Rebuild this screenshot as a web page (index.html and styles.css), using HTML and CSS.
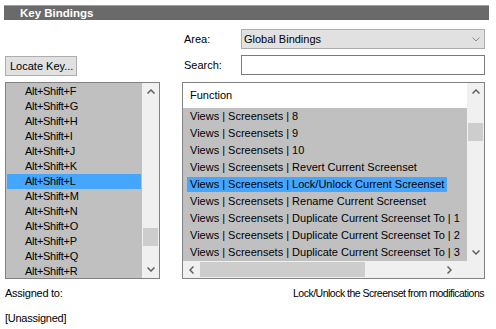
FILE: index.html
```html
<!DOCTYPE html>
<html lang="en">
<head>
  <meta charset="UTF-8" />
  <meta name="viewport" content="width=device-width, initial-scale=1.0"/>
  <title>Key Bindings</title>
  <link rel="stylesheet" href="styles.css">
</head>
<body>

  <div class="titlebar">Key Bindings</div>

  <div class="main">

    <!-- Locate button -->
    <div class="locate">
      <button class="btn">Locate Key...</button>
    </div>

    <!-- Area / Search -->
    <div class="form">
      <div class="form-row">
        <label>Area:</label>
        <div class="combo">
          <span>Global Bindings</span>
          <svg width="8" height="5" viewBox="0 0 8 5"><polyline points="0.5,0.5 4,4 7.5,0.5" fill="none" stroke="#8c8c8c" stroke-width="1"/></svg>
        </div>
      </div>
      <div class="form-row">
        <label>Search:</label>
        <input type="text" class="search">
      </div>
    </div>

    <!-- Key list -->
    <div class="keys">
      <ul class="key-list">
        <li>Alt+Shift+F</li>
        <li>Alt+Shift+G</li>
        <li>Alt+Shift+H</li>
        <li>Alt+Shift+I</li>
        <li>Alt+Shift+J</li>
        <li>Alt+Shift+K</li>
        <li class="selected">Alt+Shift+L</li>
        <li>Alt+Shift+M</li>
        <li>Alt+Shift+N</li>
        <li>Alt+Shift+O</li>
        <li>Alt+Shift+P</li>
        <li>Alt+Shift+Q</li>
        <li>Alt+Shift+R</li>
      </ul>
      <div class="vscroll">
        <div class="arrow"><svg width="8" height="5" viewBox="0 0 8 5"><polyline points="0.5,4.5 4,1 7.5,4.5" fill="none" stroke="#606060" stroke-width="1.5"/></svg></div>
        <div class="track"><div class="thumb keys-thumb"></div></div>
        <div class="arrow"><svg width="8" height="5" viewBox="0 0 8 5"><polyline points="0.5,0.5 4,4 7.5,0.5" fill="none" stroke="#606060" stroke-width="1.5"/></svg></div>
      </div>
    </div>

    <!-- Function list -->
    <div class="funcs">
      <div class="funcs-body">
        <div class="funcs-head">Function</div>
        <ul class="func-list">
          <li><span>Views | Screensets | 8</span></li>
          <li><span>Views | Screensets | 9</span></li>
          <li><span>Views | Screensets | 10</span></li>
          <li><span>Views | Screensets | Revert Current Screenset</span></li>
          <li class="selected"><span>Views | Screensets | Lock/Unlock Current Screenset</span></li>
          <li><span>Views | Screensets | Rename Current Screenset</span></li>
          <li><span>Views | Screensets | Duplicate Current Screenset To | 1</span></li>
          <li><span>Views | Screensets | Duplicate Current Screenset To | 2</span></li>
          <li><span>Views | Screensets | Duplicate Current Screenset To | 3</span></li>
        </ul>
        <div class="hscroll">
          <div class="arrow"><svg width="5" height="8" viewBox="0 0 5 8"><polyline points="4.5,0.5 1,4 4.5,7.5" fill="none" stroke="#606060" stroke-width="1.5"/></svg></div>
          <div class="track"><div class="thumb funcs-hthumb"></div></div>
          <div class="arrow arrow-end"><svg width="5" height="8" viewBox="0 0 5 8"><polyline points="0.5,0.5 4,4 0.5,7.5" fill="none" stroke="#606060" stroke-width="1.5"/></svg></div>
        </div>
      </div>
      <div class="vscroll-col">
        <div class="vscroll">
          <div class="arrow"><svg width="8" height="5" viewBox="0 0 8 5"><polyline points="0.5,4.5 4,1 7.5,4.5" fill="none" stroke="#606060" stroke-width="1.5"/></svg></div>
          <div class="track"><div class="thumb funcs-thumb"></div></div>
          <div class="arrow"><svg width="8" height="5" viewBox="0 0 8 5"><polyline points="0.5,0.5 4,4 7.5,0.5" fill="none" stroke="#606060" stroke-width="1.5"/></svg></div>
        </div>
        <div class="corner"></div>
      </div>
    </div>

    <!-- Footer -->
    <div class="assigned">
      <div>Assigned to:</div>
      <div class="unassigned">[Unassigned]</div>
    </div>
    <div class="desc">Lock/Unlock the Screenset from modifications</div>

  </div>

</body>
</html>
```

FILE: styles.css
```css
* {
  box-sizing: border-box;
}
body {
  margin: 0;
  background: #fff;
  font-family: "Liberation Sans", Arial, sans-serif;
  font-size: 11px;
  color: #000;
}
ul {
  list-style: none;
  margin: 0;
  padding: 0;
}

.titlebar {
  margin: 5px 7px 0 4px;
  height: 15px;
  background: #6a6a6a;
  border-top: 1px solid #a0a0a0;
  color: #fff;
  font-weight: bold;
  font-size: 11.5px;
  line-height: 14px;
  padding-left: 16px;
}

.main {
  display: grid;
  grid-template-columns: 155px 303px;
  column-gap: 22px;
  margin: 9px 0 0 5px;
}

/* top controls */
.locate {
  align-self: end;
  margin-bottom: 6px;
}
.btn {
  width: 72px;
  height: 20px;
  padding: 0 0 0 4px;
  text-align: left;
  background: #e1e1e1;
  border: 1px solid #adadad;
  font: inherit;
  color: #000;
}
.form {
  display: flex;
  flex-direction: column;
  gap: 6px;
  padding-bottom: 7px;
}
.form-row {
  display: flex;
  align-items: center;
  height: 20px;
}
.form-row label {
  width: 59px;
  padding-left: 2px;
}
.combo {
  width: 244px;
  height: 20px;
  background: #e1e1e1;
  border: 1px solid #adadad;
  display: flex;
  align-items: center;
  justify-content: space-between;
  padding: 0 4px 0 2px;
}
.search {
  width: 244px;
  height: 20px;
  margin: 0;
  border: 1px solid #7a7a7a;
  background: #fff;
}

/* key list */
.keys {
  height: 197px;
  border: 1px solid #828282;
  display: flex;
  background: #c0c0c0;
}
.key-list {
  flex: 1;
  padding: 1px;
  overflow: hidden;
  letter-spacing: -0.3px;
}
.key-list li {
  height: 15px;
  line-height: 15px;
  padding-left: 18px;
}
.key-list li.selected {
  background: #45a6ff;
}

/* scrollbars */
.vscroll {
  width: 17px;
  background: #f0f0f0;
  display: flex;
  flex-direction: column;
}
.vscroll .arrow {
  height: 17px;
  display: flex;
  align-items: center;
  justify-content: center;
}
.vscroll .track {
  flex: 1;
  padding: 0 1px;
}
.vscroll .thumb {
  height: 18px;
  background: #cdcdcd;
}
.keys-thumb {
  margin-top: 128px;
}
.funcs-thumb {
  margin-top: 23px;
}
.hscroll {
  height: 17px;
  background: #f0f0f0;
  display: flex;
}
.hscroll .arrow {
  width: 17px;
  display: flex;
  align-items: center;
  justify-content: center;
}
.hscroll .arrow-end {
  margin-right: 9px;
}
.hscroll .track {
  flex: 1;
  padding: 1px 0;
}
.funcs-hthumb {
  width: 165px;
  height: 15px;
  background: #cdcdcd;
}

/* function list */
.funcs {
  height: 197px;
  border: 1px solid #828282;
  display: flex;
}
.funcs-body {
  flex: 1;
  display: flex;
  flex-direction: column;
  min-width: 0;
}
.funcs-head {
  height: 25px;
  line-height: 25px;
  padding-left: 7px;
  background: #fff;
}
.func-list {
  flex: 1;
  background: #c0c0c0;
  overflow: hidden;
}
.func-list li {
  height: 17px;
  padding: 1px 0 0 4px;
  white-space: nowrap;
}
.func-list span {
  display: inline-block;
  height: 15px;
  line-height: 15px;
  padding: 0 3px;
}
.func-list li.selected span {
  background: #45a6ff;
}
.vscroll-col {
  width: 17px;
  display: flex;
  flex-direction: column;
}
.vscroll-col .vscroll {
  flex: 1;
}
.corner {
  height: 17px;
  background: #f0f0f0;
}

/* footer */
.assigned {
  padding-top: 8px;
  line-height: 13px;
  letter-spacing: -0.25px;
}
.unassigned {
  margin-top: 12px;
}
.desc {
  padding-top: 8px;
  padding-right: 1px;
  line-height: 13px;
  font-size: 10.5px;
  letter-spacing: -0.5px;
  text-align: right;
}
```
